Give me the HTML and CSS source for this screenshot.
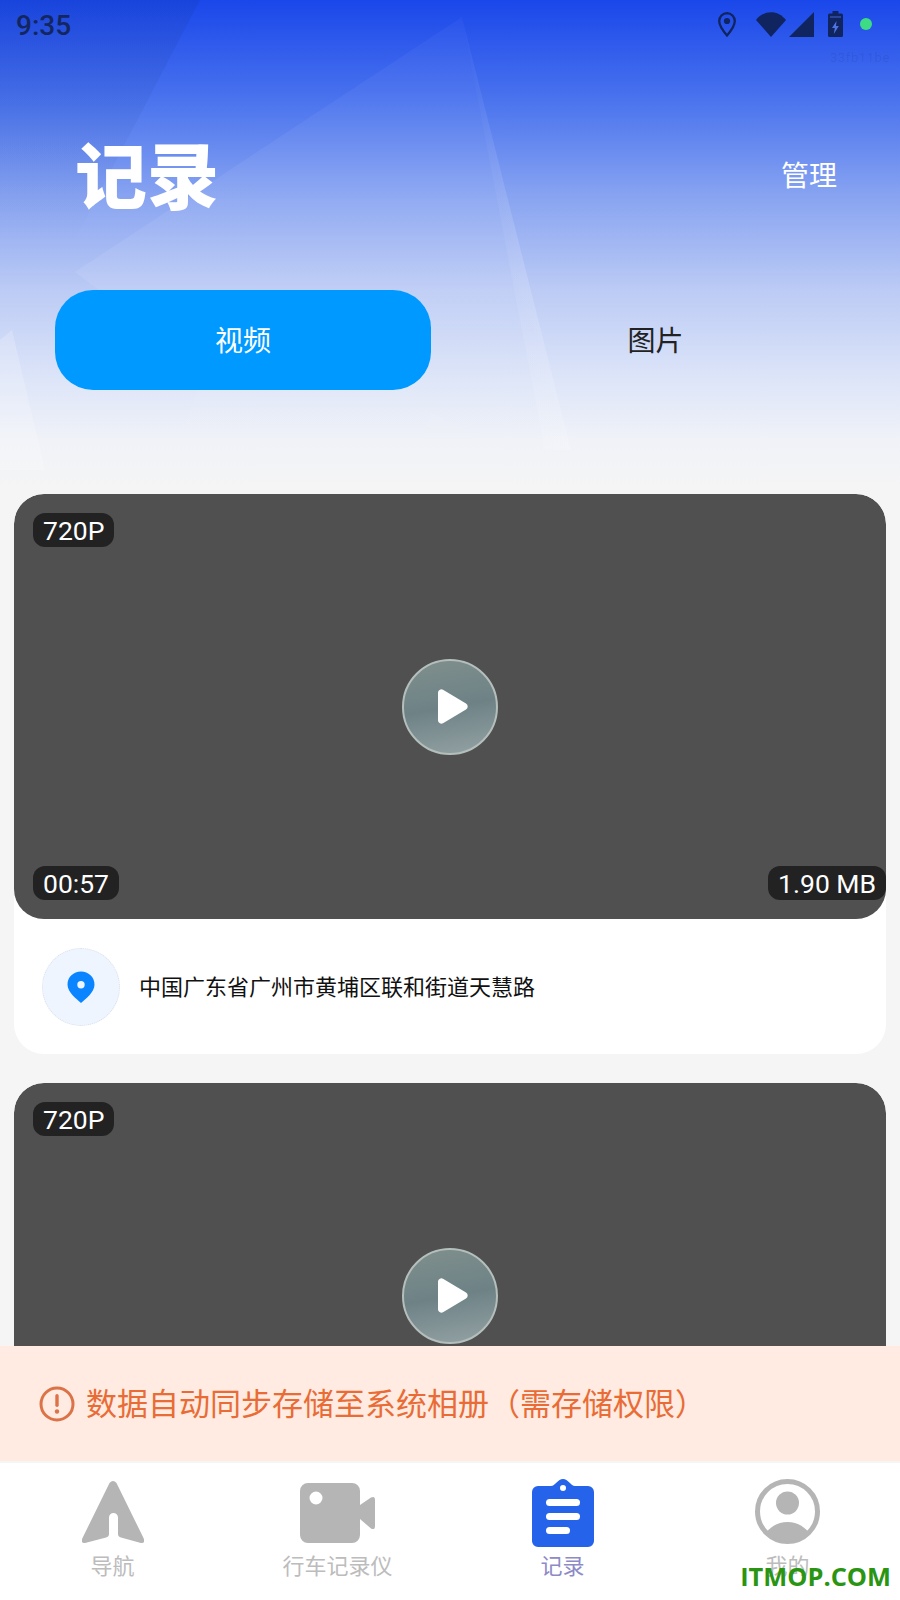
FILE: index.html
```html
<!DOCTYPE html>
<html lang="zh-CN">
<head>
<meta charset="utf-8">
<title>记录</title>
<link rel="stylesheet" href="styles.css">
</head>
<body>
<div class="app">
  <main class="scroll">
    <section class="hero">
      <svg class="hero-art" viewBox="0 0 900 494" preserveAspectRatio="none" aria-hidden="true">
        <defs>
          <linearGradient id="fade" x1="0" y1="0" x2="0" y2="1">
            <stop offset="0" stop-color="#fff" stop-opacity=".03"/>
            <stop offset=".6" stop-color="#fff" stop-opacity=".08"/>
            <stop offset="1" stop-color="#fff" stop-opacity=".02"/>
          </linearGradient>
          <linearGradient id="edge" x1="0" y1="0" x2="1" y2="0">
            <stop offset="0" stop-color="#fff" stop-opacity="0"/>
            <stop offset="1" stop-color="#fff" stop-opacity=".14"/>
          </linearGradient>
          <linearGradient id="dark" x1="0" y1="0" x2="0" y2="1">
            <stop offset="0" stop-color="#10307f" stop-opacity=".13"/>
            <stop offset=".7" stop-color="#10307f" stop-opacity="0"/>
          </linearGradient>
        </defs>
        <polygon points="0,0 200,0 20,345 0,350" fill="url(#dark)"/>
        <polygon points="462,17 75,272 205,370 175,450 571,450" fill="url(#fade)"/>
        <polygon points="462,17 571,450 545,450" fill="url(#edge)"/>
        <polygon points="12,330 0,340 0,470 45,470" fill="#fff" opacity=".2"/>
        <polygon points="430,412 415,470 560,470" fill="#fff" opacity=".06"/>
      </svg>
      <div class="status">
        <span class="clock">9:35</span>
        <div class="status-icons">
          <svg class="ic-pin" viewBox="0 0 18 25" aria-hidden="true"><path d="M9 1.200A7.900 7.900 0 0 0 1.200 9.100C1.200 14.500 9 23.500 9 23.500s7.800-9 7.800-14.400A7.900 7.900 0 0 0 9 1.200z" fill="none" stroke="#10245f" stroke-width="2.300"/><circle cx="9" cy="9" r="3.100" fill="#10245f"/></svg>
          <svg class="ic-wifi" viewBox="0 0 30 25" aria-hidden="true"><path d="M0 8C8-2.500 22-2.500 30 8L15 25z" fill="#10245f"/></svg>
          <svg class="ic-signal" viewBox="0 0 25 25" aria-hidden="true"><polygon points="25,0 25,25 0,25" fill="#10245f"/></svg>
          <svg class="ic-batt" viewBox="0 0 15 26" aria-hidden="true"><path d="M4.500 0h6v2.500h3a1.500 1.500 0 0 1 1.500 1.500v20.500a1.500 1.500 0 0 1-1.500 1.500h-12A1.500 1.500 0 0 1 0 24.500V4a1.500 1.500 0 0 1 1.500-1.500h3z" fill="#10245f"/><path d="M8.500 10 4 17h2.800l-1 6 5-8H8z" fill="#4f74e2"/><path d="M2 5h11v2H2z" fill="#3b5bc2" opacity=".6"/></svg>
          <span class="dot"></span>
        </div>
      </div>
      <div class="hash">33fb11be</div>
      <div class="title-row">
        <h1 class="title">记录</h1>
        <span class="manage">管理</span>
      </div>
      <div class="tabs">
        <div class="tab tab-on"><span class="tab-text">视频</span></div>
        <div class="tab"><span class="tab-text">图片</span></div>
      </div>
    </section>

    <article class="card">
      <div class="video">
        <div class="video-top"><span class="badge">720P</span></div>
        <div class="video-mid">
          <div class="play"><svg viewBox="0 0 30 35" aria-hidden="true"><path d="M5 .8 28 14.500a3.500 3.500 0 0 1 0 6L5 34.200A3.400 3.400 0 0 1 0 31V4A3.400 3.400 0 0 1 5 .8z" fill="#fff"/></svg></div>
        </div>
        <div class="video-bottom"><span class="badge">00:57</span><span class="badge">1.90 MB</span></div>
      </div>
      <div class="place">
        <span class="place-ic"><svg viewBox="0 0 28 32" aria-hidden="true"><path fill-rule="evenodd" d="M14 .5C6.500 .5 .5 6 .5 13.500.5 21 9 27.500 14 32c5-4.500 13.500-11 13.500-18.500C27.500 6 21.500 .5 14 .5zM14 10a3.700 3.700 0 1 1 0 7.400 3.700 3.700 0 0 1 0-7.400z" fill="#0a84ff"/></svg></span>
        <span class="place-text">中国广东省广州市黄埔区联和街道天慧路</span>
      </div>
    </article>

    <article class="card">
      <div class="video">
        <div class="video-top"><span class="badge">720P</span></div>
        <div class="video-mid">
          <div class="play"><svg viewBox="0 0 30 35" aria-hidden="true"><path d="M5 .8 28 14.500a3.500 3.500 0 0 1 0 6L5 34.200A3.400 3.400 0 0 1 0 31V4A3.400 3.400 0 0 1 5 .8z" fill="#fff"/></svg></div>
        </div>
        <div class="video-bottom"></div>
      </div>
    </article>
  </main>

  <div class="notice">
    <svg class="notice-ic" viewBox="0 0 36 36" aria-hidden="true"><circle cx="18" cy="18" r="16" fill="none" stroke="#dc7348" stroke-width="3"/><rect x="16.300" y="8" width="3.400" height="13" rx="1.700" fill="#dc7348"/><circle cx="18" cy="25.500" r="2.200" fill="#dc7348"/></svg>
    <span class="notice-text">数据自动同步存储至系统相册（需存储权限）</span>
  </div>

  <nav class="nav">
    <div class="nav-item">
      <div class="nav-slot">
        <svg class="ic-nav" viewBox="0 0 62 64" aria-hidden="true"><path d="M27.500 3Q31-1 34.500 3L61.500 58Q64 64 58 62.800L39 57.500Q36 56.500 36 54V37.500A4.500 4.500 0 0 0 27 37.500V54Q27 56.500 24 57.500L4 62.800Q-2 64 .5 58Z" fill="#b5b5b5"/></svg>
      </div>
      <span class="nav-label">导航</span>
    </div>
    <div class="nav-item">
      <div class="nav-slot">
        <svg class="ic-video" viewBox="0 0 75 60" aria-hidden="true"><path fill-rule="evenodd" d="M8 0h44a8 8 0 0 1 8 8v44a8 8 0 0 1-8 8H8a8 8 0 0 1-8-8V8a8 8 0 0 1 8-8zM16 8.500a6.500 6.500 0 1 0 0 13 6.500 6.500 0 0 0 0-13z" fill="#b5b5b5"/><path d="M60 22 71 14.500Q75 12.500 75 17V43Q75 47.500 71 45.500L60 36Z" fill="#b5b5b5"/></svg>
      </div>
      <span class="nav-label">行车记录仪</span>
    </div>
    <div class="nav-item">
      <div class="nav-slot">
        <svg class="ic-rec" viewBox="0 0 62 68" aria-hidden="true"><path fill-rule="evenodd" d="M6 7h13C23 7 26 0 31 0S39 7 43 7h13a6 6 0 0 1 6 6v49a6 6 0 0 1-6 6H6a6 6 0 0 1-6-6V13a6 6 0 0 1 6-6zM31 6a3 3 0 1 0 0 6 3 3 0 0 0 0-6z" fill="#2563eb"/><rect x="14" y="20" width="34" height="7" rx="3.500" fill="#fff"/><rect x="14" y="34" width="34" height="7" rx="3.500" fill="#fff"/><rect x="14" y="48" width="24" height="7" rx="3.500" fill="#fff"/></svg>
      </div>
      <span class="nav-label nav-on">记录</span>
    </div>
    <div class="nav-item">
      <div class="nav-slot">
        <svg class="ic-me" viewBox="0 0 65 65" aria-hidden="true"><circle cx="32.500" cy="32.500" r="30" fill="none" stroke="#b5b5b5" stroke-width="5"/><circle cx="32.500" cy="24" r="11.500" fill="#b5b5b5"/><path d="M11 53.500C17 46.500 24 43 32.500 43S48 46.500 54 53.500A30 30 0 0 1 11 53.500Z" fill="#b5b5b5"/></svg>
      </div>
      <span class="nav-label">我的</span>
    </div>
  </nav>
  <div class="watermark">ITMOP.COM</div>
</div>
</body>
</html>
```
FILE: styles.css
```css
* { box-sizing: border-box; }
html, body { margin: 0; padding: 0; }
body { width: 900px; height: 1600px; overflow: hidden; background: #f5f5f5; font-family: "Noto Sans CJK SC", "Noto Sans", sans-serif; }
.app { position: relative; width: 900px; height: 1600px; display: flex; flex-direction: column; overflow: hidden; }

.scroll { flex: 1; min-height: 0; overflow: hidden; display: flex; flex-direction: column; gap: 29px; }

.hero { position: relative; flex: none; height: 494px; margin-bottom: -29px; background: linear-gradient(180deg, #1a47ea 0, #4a73ee 100px, #8aa5f1 200px, #bccbf5 290px, #dde5f8 380px, #f0f2f8 440px, #f5f5f5 490px); }
.hero-art { position: absolute; left: 0; top: 0; width: 900px; height: 494px; }

.status { position: relative; height: 50px; display: flex; justify-content: space-between; align-items: center; padding: 0 28px 0 16px; }
.clock { font-family: Roboto, sans-serif; font-size: 28px; font-weight: 500; color: #14265f; }
.status-icons { display: flex; align-items: center; margin-top: -2px; }
.ic-pin { width: 18px; height: 25px; margin-right: 20px; }
.ic-wifi { width: 30px; height: 25px; }
.ic-signal { width: 25px; height: 25px; margin-left: 3px; margin-right: 14px; }
.ic-batt { width: 15px; height: 26px; margin-right: 17px; }
.dot { width: 12px; height: 12px; border-radius: 50%; background: #3ddc84; }
.hash { position: relative; height: 14px; margin-top: 1px; padding-right: 10px; text-align: right; font-family: Roboto, sans-serif; font-size: 13px; line-height: 14px; letter-spacing: .6px; color: rgba(20, 38, 95, .13); }

.title-row { position: relative; display: flex; justify-content: space-between; align-items: center; height: 100px; margin-top: 57px; padding: 0 63px 0 75px; }
.title { margin: 0; font-size: 72px; line-height: 100px; font-weight: 900; color: #fff; }
.manage { font-size: 28px; color: #fff; padding-top: 4px; }

.tabs { position: relative; display: grid; grid-template-columns: 376px 1fr; margin-top: 68px; padding: 0 20px 0 55px; }
.tab { height: 100px; display: flex; align-items: center; justify-content: center; font-size: 28px; color: #222; }
.tab-text { padding-bottom: 3px; }
.tab-on { background: #0099ff; border-radius: 38px; color: #fff; }

.card { flex: none; position: relative; margin: 0 14px; background: #fff; border-radius: 30px; overflow: hidden; }
.video { height: 425px; background: #505050; border-radius: 30px; display: flex; flex-direction: column; justify-content: space-between; padding-top: 19px; padding-bottom: 19px; position: relative; }
.video-top { padding-left: 19px; height: 34px; }
.video-mid { flex: 1; display: flex; align-items: center; justify-content: center; }
.video-bottom { display: flex; justify-content: space-between; padding-left: 19px; height: 34px; }
.badge { display: inline-flex; align-items: center; height: 34px; padding: 0 10px; background: #222; border-radius: 12px; font-family: Roboto, sans-serif; font-size: 26.500px; color: #fff; }

.play { width: 96px; height: 96px; border-radius: 50%; display: flex; align-items: center; justify-content: center; border: 2px solid #b4bfbc; background: linear-gradient(170deg, #7f8f8c 0, #6e8286 50%, #94a2a4 100%); }
.play svg { width: 30px; height: 35px; margin-left: 6px; }

.place { height: 135px; display: flex; align-items: center; padding: 0 0 0 28px; gap: 19px; }
.place-ic { width: 78px; height: 78px; border-radius: 50%; background: #eef5ff; display: flex; align-items: center; justify-content: center; border: 1px dotted #d9dfe6; }
.place-ic svg { width: 28px; height: 32px; }
.place-text { font-size: 22px; color: #111; padding-bottom: 4px; }

.notice { flex: none; height: 115px; margin-bottom: 2px; display: flex; align-items: center; gap: 11px; padding-left: 39px; background: #ffebe1; }
.notice-ic { width: 36px; height: 36px; flex: none; }
.notice-text { font-size: 31px; color: #e96b36; padding-bottom: 4px; }

.nav { flex: none; height: 137px; background: #fff; display: grid; grid-template-columns: repeat(4, 225px); }
.nav-item { display: flex; flex-direction: column; align-items: center; }
.nav-slot { flex: none; height: 71px; margin-top: 15px; display: flex; flex-direction: column; align-items: center; }
.ic-nav { width: 62px; height: 64px; margin-top: 2px; }
.ic-video { width: 75px; height: 60px; margin-top: 5px; }
.ic-rec { width: 62px; height: 68px; margin-top: 1px; }
.ic-me { width: 65px; height: 65px; margin-top: 1px; }
.nav-label { font-size: 22px; line-height: 30px; color: #bcbcbc; }
.nav-on { color: #8d8ac8; }

.watermark { position: absolute; right: 9px; bottom: 6px; font-family: "Open Sans", sans-serif; font-weight: 700; font-size: 25.400px; line-height: 36px; color: #2a9413; }
```
